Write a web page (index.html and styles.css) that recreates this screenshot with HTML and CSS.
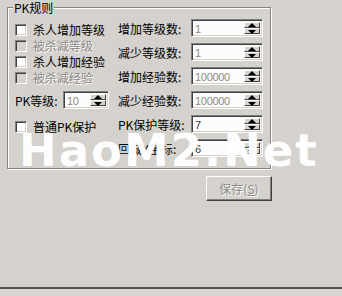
FILE: index.html
```html
<!DOCTYPE html>
<html>
<head>
<meta charset="utf-8">
<link rel="stylesheet" href="styles.css">
</head>
<body>
<div class="page">
  <div class="main">
    <div class="group">
      <div class="legend">PK规则</div>
      <div class="cols">
        <div class="left">
          <div class="check"><span class="box"></span><span>杀人增加等级</span></div>
          <div class="check disabled"><span class="box"></span><span>被杀减等级</span></div>
          <div class="check"><span class="box"></span><span>杀人增加经验</span></div>
          <div class="check disabled"><span class="box"></span><span>被杀减经验</span></div>
          <div class="pkrow">
            <span class="lbl-s">PK等级:</span>
            <div class="spin small"><span class="val">10</span><span class="btns"><span class="up"></span><span class="down"></span></span></div>
          </div>
          <div class="check pkprot"><span class="box"></span><span>普通PK保护</span></div>
        </div>
        <div class="right">
          <div class="row"><span class="lbl">增加等级数:</span><div class="spin"><span class="val">1</span><span class="btns"><span class="up"></span><span class="down"></span></span></div></div>
          <div class="row"><span class="lbl">减少等级数:</span><div class="spin"><span class="val">1</span><span class="btns"><span class="up"></span><span class="down"></span></span></div></div>
          <div class="row"><span class="lbl">增加经验数:</span><div class="spin"><span class="val">100000</span><span class="btns"><span class="up"></span><span class="down"></span></span></div></div>
          <div class="row"><span class="lbl">减少经验数:</span><div class="spin"><span class="val">100000</span><span class="btns"><span class="up"></span><span class="down"></span></span></div></div>
          <div class="row"><span class="lbl">PK保护等级:</span><div class="spin"><span class="val dark">7</span><span class="btns"><span class="up"></span><span class="down"></span></span></div></div>
          <div class="row"><span class="lbl">回城X坐标:</span><div class="spin"><span class="val dark">6</span><span class="btns"><span class="up"></span><span class="down"></span></span></div></div>
        </div>
      </div>
    </div>
    <div class="actions">
      <button class="btn" disabled>保存(<u>S</u>)</button>
    </div>
  </div>
  <div class="statusbar"></div>
  <div class="watermark">HaoM2.Net</div>
</div>
</body>
</html>
```

FILE: styles.css
```css
* { box-sizing: border-box; }
html, body {
  margin: 0;
  padding: 0;
  background: #d5d2cd;
}
body {
  font-family: "Noto Sans CJK SC", "Liberation Sans", sans-serif;
  font-size: 12px;
  color: #000;
}
.page {
  position: relative;
  width: 342px;
  height: 296px;
  display: flex;
  flex-direction: column;
  overflow: hidden;
}
.main {
  height: 287px;
  padding: 7px 0 0 7px;
}
.group {
  position: relative;
  width: 264px;
  height: 162px;
  border: 1px solid #858380;
  box-shadow: inset 1px 1px 0 #fff, 1px 1px 0 #fff;
  padding: 11px 0 0 7px;
}
.legend {
  position: absolute;
  top: -7px;
  left: 5px;
  padding: 0 1px;
  line-height: 14px;
  background: #d5d2cd;
}
.cols {
  display: flex;
  gap: 7px;
}
.left {
  width: 96px;
  padding-top: 3px;
  display: flex;
  flex-direction: column;
}
.check {
  height: 16px;
  display: flex;
  align-items: center;
  gap: 6px;
  line-height: 16px;
  white-space: nowrap;
}
.box {
  width: 12px;
  height: 12px;
  background: #fff;
  border-top: 1px solid #808080;
  border-left: 1px solid #808080;
  border-bottom: 1px solid #fff;
  border-right: 1px solid #fff;
  box-shadow: inset 1px 1px 0 #404040, inset -1px -1px 0 #d4d0c8;
  flex: none;
}
.check.disabled {
  color: #8c8a87;
  text-shadow: 1px 1px 0 #fff;
}
.check.disabled .box {
  background: #d5d2cd;
}
.pkrow {
  margin-top: 5px;
  height: 18px;
  display: flex;
  align-items: center;
}
.lbl-s {
  width: 48px;
  white-space: nowrap;
}
.pkprot {
  margin-top: 10px;
}
.right {
  display: flex;
  flex-direction: column;
  gap: 6px;
}
.row {
  height: 18px;
  display: flex;
  align-items: center;
}
.lbl {
  width: 73px;
  white-space: nowrap;
}
.spin {
  width: 72px;
  height: 18px;
  display: flex;
  align-items: stretch;
  background: #fcfcfc;
  border-top: 1px solid #808080;
  border-left: 1px solid #808080;
  border-bottom: 1px solid #fff;
  border-right: 1px solid #fff;
  box-shadow: inset 1px 1px 0 #404040, inset -1px -1px 0 #d4d0c8;
  padding: 2px 2px 2px 3px;
}
.spin.small {
  width: 46px;
}
.val {
  flex: 1;
  font-family: "Liberation Sans", sans-serif;
  font-size: 11px;
  letter-spacing: -0.3px;
  line-height: 14px;
  color: #8c8a87;
}
.val.dark {
  color: #333;
}
.btns {
  width: 16px;
  display: flex;
  flex-direction: column;
}
.btns span {
  flex: 1;
  position: relative;
  background: #d5d2cd;
  border-top: 1px solid #fff;
  border-left: 1px solid #fff;
  border-right: 1px solid #404040;
  border-bottom: 1px solid #404040;
}
.btns .up::after,
.btns .down::after {
  content: "";
  position: absolute;
  left: 3px;
  width: 0;
  height: 0;
  border-left: 4px solid transparent;
  border-right: 4px solid transparent;
}
.btns .up::after {
  top: 0px;
  border-bottom: 4px solid #000;
}
.btns .down::after {
  top: 1px;
  border-top: 4px solid #000;
}
.actions {
  width: 265px;
  display: flex;
  justify-content: flex-end;
  margin-top: 7px;
}
.btn {
  width: 66px;
  height: 25px;
  padding: 0;
  font-family: "Noto Sans CJK SC", "Liberation Sans", sans-serif;
  font-size: 12px;
  color: #8c8a87;
  text-shadow: 1px 1px 0 #fff;
  background: #d5d2cd;
  border-top: 1px solid #fff;
  border-left: 1px solid #fff;
  border-right: 1px solid #404040;
  border-bottom: 1px solid #404040;
  box-shadow: inset -1px -1px 0 #808080;
}
.statusbar {
  flex: 1;
  border-top: 2px solid #555350;
  background: #dad7d2;
}
.watermark {
  position: absolute;
  left: 19px;
  top: 128px;
  font-family: "DejaVu Sans", sans-serif;
  font-weight: bold;
  font-size: 45px;
  line-height: 45px;
  letter-spacing: 2px;
  color: rgba(255, 255, 255, 0.97);
  white-space: nowrap;
}
```
